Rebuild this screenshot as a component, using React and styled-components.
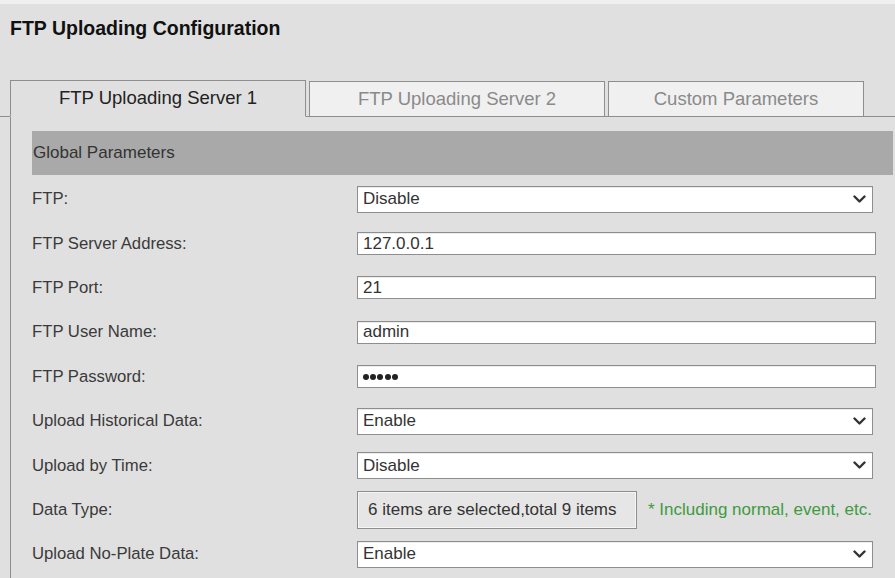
import React from "react";
import styled, { createGlobalStyle } from "styled-components";

const Global = createGlobalStyle`
  html, body { margin: 0; padding: 0; }
  body {
    background: #e0e0e0;
    font-family: "Liberation Sans", Arial, sans-serif;
    color: #333;
  }
`;

const Page = styled.div`
  width: 895px;
  min-height: 574px;
  border-top: 4px solid #efefef;
  background: #e0e0e0;
  overflow: hidden;
`;

const Title = styled.h1`
  margin: 13px 0 0 10px;
  font-size: 19.5px;
  line-height: 22px;
  font-weight: bold;
  color: #111;
`;

const TabBar = styled.div`
  display: flex;
  align-items: flex-end;
  margin-top: 41px;
  padding-left: 10px;
  border-bottom: 1px solid #8e8e8e;
  height: 36px;
`;

const Tab = styled.div`
  box-sizing: border-box;
  width: ${(p) => p.$w}px;
  height: ${(p) => (p.$active ? 37 : 35)}px;
  margin-left: ${(p) => (p.$first ? 0 : 3)}px;
  margin-bottom: ${(p) => (p.$active ? -1 : 0)}px;
  border: 1px solid #8e8e8e;
  border-bottom: ${(p) => (p.$active ? "1px solid #e0e0e0" : "none")};
  background: ${(p) => (p.$active ? "#e0e0e0" : "#f0f0f0")};
  color: ${(p) => (p.$active ? "#222" : "#8a8a8a")};
  font-size: 18.5px;
  display: flex;
  align-items: center;
  justify-content: center;
  padding-bottom: ${(p) => (p.$active ? 1 : 0)}px;
`;

const Panel = styled.div`
  margin-left: 10px;
  border-left: 1px solid #8e8e8e;
  padding: 14px 2px 0 21px;
  min-height: 460px;
`;

const SectionBar = styled.div`
  height: 44px;
  margin-bottom: 2px;
  background: #a9a9a9;
  display: flex;
  align-items: center;
  padding-left: 1px;
  font-size: 17px;
  color: #333;
`;

const Row = styled.div`
  height: 44.4px;
  display: grid;
  grid-template-columns: 325px 1fr;
  align-items: center;
`;

const Label = styled.div`
  font-size: 16.7px;
  color: #3a3a3a;
`;

const Field = styled.div`
  box-sizing: border-box;
  width: ${(p) => p.$w || 519}px;
  height: ${(p) => p.$h || 23}px;
  background: #fff;
  border: 1px solid #8e8e8e;
  box-shadow: inset 0 1px 0 rgba(0, 0, 0, 0.08);
  display: flex;
  align-items: center;
  justify-content: space-between;
  padding: 0 6px 0 5px;
  font-size: 17px;
  color: #333;
`;

const Dots = styled.span`
  display: flex;
  gap: 1.2px;
  padding-top: 1px;
`;

const Dot = styled.span`
  width: 6px;
  height: 6px;
  border-radius: 50%;
  background: #222;
`;

const Chevron = () => (
  <svg width="13" height="9" viewBox="0 0 13 9">
    <polyline
      points="1.5,1.5 6.5,6.5 11.5,1.5"
      fill="none"
      stroke="#333"
      strokeWidth="2.4"
      strokeLinecap="round"
      strokeLinejoin="round"
    />
  </svg>
);

const Control = styled.div`
  display: flex;
  align-items: center;
  gap: 11px;
`;

const SelectButton = styled.div`
  box-sizing: border-box;
  width: 280px;
  height: 38px;
  border: 1px solid #8e8e8e;
  box-shadow: inset 0 0 0 1px #f6f6f6;
  background: #e6e6e6;
  display: flex;
  align-items: center;
  padding-left: 10px;
  font-size: 17px;
  color: #333;
  white-space: nowrap;
`;

const Hint = styled.span`
  font-size: 17px;
  color: #3f9a3f;
  white-space: nowrap;
`;

function SelectField({ value }) {
  return (
    <Field $w={516} $h={27}>
      <span>{value}</span>
      <Chevron />
    </Field>
  );
}

export default function App() {
  return (
    <>
      <Global />
      <Page>
        <Title>FTP Uploading Configuration</Title>
        <TabBar>
          <Tab $first $active $w={296}>FTP Uploading Server 1</Tab>
          <Tab $w={296}>FTP Uploading Server 2</Tab>
          <Tab $w={256}>Custom Parameters</Tab>
        </TabBar>
        <Panel>
          <SectionBar>Global Parameters</SectionBar>
          <Row>
            <Label>FTP:</Label>
            <SelectField value="Disable" />
          </Row>
          <Row>
            <Label>FTP Server Address:</Label>
            <Field>127.0.0.1</Field>
          </Row>
          <Row>
            <Label>FTP Port:</Label>
            <Field>21</Field>
          </Row>
          <Row>
            <Label>FTP User Name:</Label>
            <Field>admin</Field>
          </Row>
          <Row>
            <Label>FTP Password:</Label>
            <Field aria-label="password">
              <Dots>
                {[0, 1, 2, 3, 4].map((i) => (
                  <Dot key={i} />
                ))}
              </Dots>
            </Field>
          </Row>
          <Row>
            <Label>Upload Historical Data:</Label>
            <SelectField value="Enable" />
          </Row>
          <Row>
            <Label>Upload by Time:</Label>
            <SelectField value="Disable" />
          </Row>
          <Row>
            <Label>Data Type:</Label>
            <Control>
              <SelectButton>6 items are selected,total 9 items</SelectButton>
              <Hint>* Including normal, event, etc.</Hint>
            </Control>
          </Row>
          <Row>
            <Label>Upload No-Plate Data:</Label>
            <SelectField value="Enable" />
          </Row>
        </Panel>
      </Page>
    </>
  );
}
